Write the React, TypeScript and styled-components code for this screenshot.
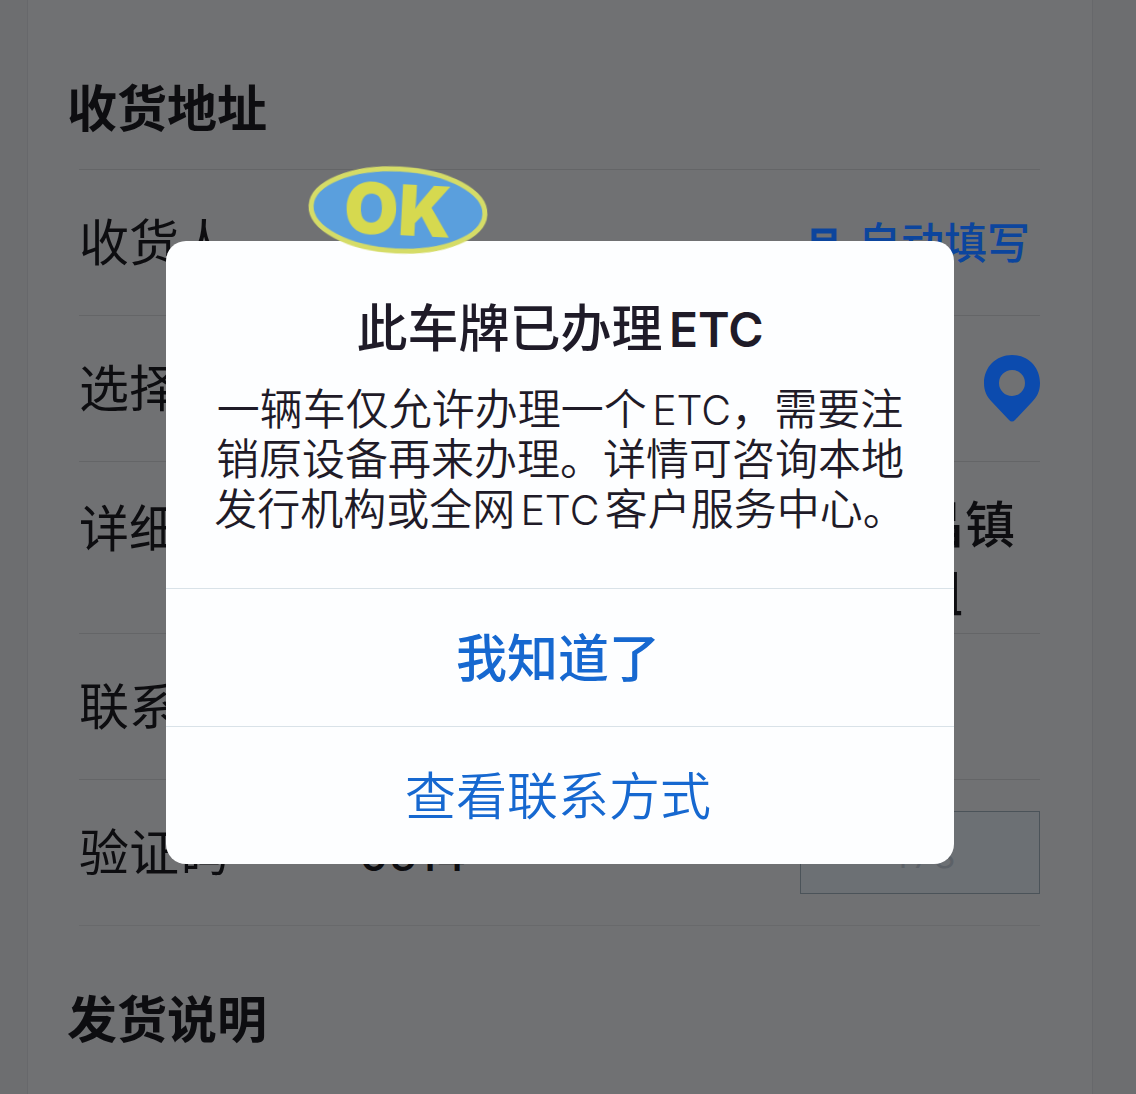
import React from "react";
import styled, { createGlobalStyle } from "styled-components";

const Global = createGlobalStyle`
  * { box-sizing: border-box; }
  body {
    margin: 0;
    background: #6d6e70;
    color: #0d0d10;
    font-family: Inter, "Noto Sans CJK SC", sans-serif;
    text-autospace: normal;
  }
  h1, h2, p { margin: 0; }
  button, input { font: inherit; color: inherit; }
`;

const Page = styled.main`
  min-height: 100vh;
  padding: 0 43px 0 27px;
  overflow: hidden;
`;

const Sheet = styled.div`
  min-height: 100vh;
  padding: 0 52px 0 51px;
  background: #707173;
  border: solid #67686b;
  border-width: 0 1px;
`;

const Heading = styled.h2<{ $later?: boolean }>`
  margin-left: -12px;
  padding: ${(p) => (p.$later ? "58px" : "73px")} 0 24px;
  font-size: 50px;
  line-height: 72px;
  font-weight: 700;
`;

const Row = styled.div<{ $top?: boolean }>`
  display: flex;
  align-items: ${(p) => (p.$top ? "flex-start" : "center")};
  min-height: 146px;
  padding: ${(p) => (p.$top ? "29px 0 4px" : "0")};
  border-top: 1px solid #646567;
  font-size: 50px;
  line-height: 69px;
`;

const Label = styled.label`
  flex: 0 0 280px;
  line-height: 76px;
`;

const Fill = styled.button`
  display: flex;
  align-items: center;
  gap: 20px;
  margin-left: auto;
  padding: 2px 10px 0 0;
  border: 0;
  background: none;
  color: #0c459d;
  font-size: 43px;
  font-weight: 500;
`;

const PinButton = styled.button`
  display: flex;
  margin-left: auto;
  padding: 0;
  border: 0;
  background: none;
`;

const Address = styled.div`
  flex: 1;
  padding-right: 25px;
  font-weight: 500;
  text-align: right;
`;

const AddressLine = styled.div<{ $short?: boolean }>`
  padding-right: ${(p) => (p.$short ? "52px" : "0")};
`;

const Code = styled.input`
  flex: 1;
  min-width: 0;
  padding: 4px 0 0;
  border: 0;
  outline: 0;
  background: none;
  font-size: 46px;
  font-weight: 500;
`;

const Resend = styled.button`
  width: 240px;
  height: 83px;
  border: 1px solid #4b5359;
  background: #6c7074;
  color: #5c6167;
  font-size: 43px;
  font-weight: 300;
`;

const Rule = styled.div`
  border-top: 1px solid #68696b;
`;

const Backdrop = styled.div`
  position: fixed;
  inset: 0;
  display: flex;
  align-items: center;
  justify-content: center;
  padding: 10px 16px 0 0;
`;

const Dialog = styled.section`
  position: relative;
  width: 100%;
  max-width: 788px;
  background: #fdfeff;
  border-radius: 20px;
  text-align: center;
`;

const Message = styled.div`
  padding: 53px 46px 54px;
`;

const Title = styled.h1`
  font-size: 51px;
  line-height: 70px;
  font-weight: 500;
  color: #1f1b28;
`;

const Body = styled.p`
  padding-top: 20px;
  font-size: 43px;
  line-height: 50px;
  font-weight: 350;
  color: #1f1b28;
`;

const Latin = styled.span<{ $strong?: boolean }>`
  font-size: ${(p) => (p.$strong ? "48px" : "41px")};
  line-height: 1;
  font-weight: ${(p) => (p.$strong ? 600 : 350)};
`;

const Action = styled.button<{ $strong?: boolean }>`
  display: block;
  width: 100%;
  height: 138px;
  padding: 0 4px 4px 0;
  border: 0;
  border-top: 1px solid #d9e2e8;
  background: none;
  color: #1668d0;
  font-size: 51px;
  font-weight: ${(p) => (p.$strong ? 500 : 350)};
`;

const Badge = styled.svg`
  position: absolute;
  top: -76px;
  left: 141px;
`;

export default function App() {
  return (
    <>
      <Global />
      <Page>
        <Sheet>
          <Heading>收货地址</Heading>
          <Row>
            <Label>收货人</Label>
            <Fill>
              <svg width="28" height="36" viewBox="0 0 28 36" fill="none" stroke="currentColor" strokeWidth="5">
                <path d="M4 24V5h20v19M4 14h20M2 26h24" />
              </svg>
              自动填写
            </Fill>
          </Row>
          <Row>
            <Label>选择</Label>
            <PinButton aria-label="选择">
              <svg width="56" height="67" viewBox="0 0 56 67">
                <path
                  fill="#0c4bae"
                  fillRule="evenodd"
                  d="M28 0C12 0 0 12 0 28c0 8 3 14 8 19l17 18q3 3 6 0l17-18c5-5 8-11 8-19C56 12 44 0 28 0Zm0 15a13 13 0 1 1 0 26a13 13 0 1 1 0-26Z"
                />
              </svg>
            </PinButton>
          </Row>
          <Row $top>
            <Label>详细</Label>
            <Address>
              <AddressLine>昌镇</AddressLine>
              <AddressLine $short>组</AddressLine>
            </Address>
          </Row>
          <Row>
            <Label>联系</Label>
          </Row>
          <Row>
            <Label htmlFor="code">验证码</Label>
            <Code id="code" defaultValue="0514" />
            <Resend>47s</Resend>
          </Row>
          <Rule />
          <Heading $later>发货说明</Heading>
        </Sheet>
      </Page>
      <Backdrop>
        <Dialog role="dialog" aria-labelledby="dialog-title">
          <Message>
            <Title id="dialog-title">
              此车牌已办理<Latin $strong>ETC</Latin>
            </Title>
            <Body>
              一辆车仅允许办理一个<Latin>ETC</Latin>，需要注销原设备再来办理。详情可咨询本地发行机构或全网<Latin>ETC</Latin>客户服务中心。
            </Body>
          </Message>
          <Action $strong>我知道了</Action>
          <Action>查看联系方式</Action>
          <Badge width="182" height="90" viewBox="0 0 182 90">
            <g transform="rotate(3 91 45)">
              <ellipse cx="91" cy="45" rx="87" ry="41" fill="#5a9fdd" stroke="#d5dc67" strokeWidth="5" />
              <text
                x="91"
                y="70"
                textAnchor="middle"
                fontFamily="Inter, sans-serif"
                fontWeight="900"
                fontSize="70"
                fill="#d6d94f"
              >
                OK
              </text>
            </g>
          </Badge>
        </Dialog>
      </Backdrop>
    </>
  );
}
